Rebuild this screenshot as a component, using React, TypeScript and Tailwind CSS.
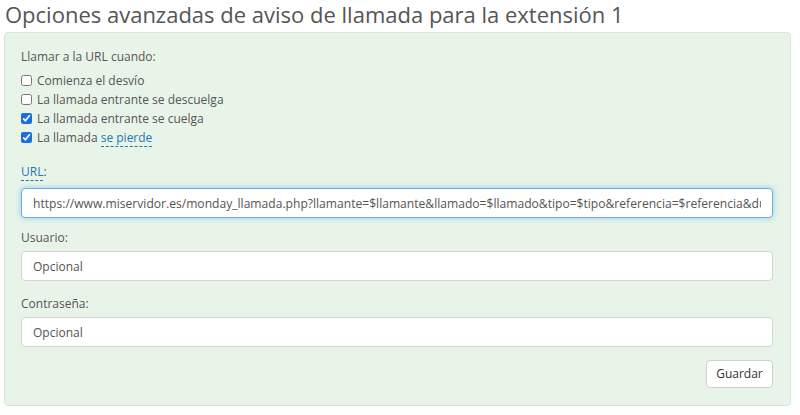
import React, { useState } from 'react';

const url =
  'https://www.miservidor.es/monday_llamada.php?llamante=$llamante&llamado=$llamado&tipo=$tipo&referencia=$referencia&duracion=$duracion';

export default function App() {
  const [checks, setChecks] = useState([false, false, true, true]);

  const toggle = (i: number) =>
    setChecks((c) => c.map((v, j) => (j === i ? !v : v)));

  const labels: React.ReactNode[] = [
    'Comienza el desvío',
    'La llamada entrante se descuelga',
    'La llamada entrante se cuelga',
    <>
      La llamada{' '}
      <span className="text-[#1f78b4] border-b border-dashed border-[#1f78b4]">se pierde</span>
    </>,
  ];

  return (
    <div
      className="w-[800px] h-[415px] bg-white text-[#555] overflow-hidden"
      style={{ fontFamily: '"Open Sans", "Liberation Sans", sans-serif' }}
    >
      <h1 className="pl-[5px] text-[22px] leading-[28px] font-normal text-[#555]">
        Opciones avanzadas de aviso de llamada para la extensión 1
      </h1>

      <div className="mt-[4px] ml-[4px] w-[787px] h-[374px] bg-[#e9f4e9] border border-[#d6e6d4] rounded-[4px] pt-[15px] pl-[16px] pr-[17px]">
        <div className="text-[12px] leading-[18px] mb-[5px]">Llamar a la URL cuando:</div>

        {labels.map((l, i) => (
          <label key={i} className="flex items-center h-[19px] text-[12px] gap-[5px] cursor-pointer">
            <input
              type="checkbox"
              checked={checks[i]}
              onChange={() => toggle(i)}
              className="w-[11px] h-[11px] m-0 accent-[#1a6fe0]"
            />
            <span>{l}</span>
          </label>
        ))}

        <div className="mt-[16px] text-[12px] leading-[18px]">
          <span className="text-[#1f78b4] border-b border-dashed border-[#1f78b4]">URL</span>:
        </div>
        <input
          type="text"
          defaultValue={url}
          className="mt-[7px] block w-full h-[30px] px-[11px] text-[12.1px] text-[#555] bg-white border border-[#66afe9] rounded-[4px] outline-none shadow-[0_0_6px_rgba(102,175,233,0.6)]"
        />

        <div className="mt-[11px] text-[12px] leading-[18px]">Usuario:</div>
        <input
          type="text"
          placeholder="Opcional"
          className="mt-[4px] block w-full h-[30px] px-[11px] text-[12px] bg-white border border-[#d4d4d4] rounded-[4px] outline-none placeholder:text-[#555]"
        />

        <div className="mt-[14px] text-[12px] leading-[18px]">Contraseña:</div>
        <input
          type="password"
          placeholder="Opcional"
          className="mt-[4px] block w-full h-[30px] px-[11px] text-[12px] bg-white border border-[#d4d4d4] rounded-[4px] outline-none placeholder:text-[#555]"
        />

        <div className="flex justify-end mt-[13px]">
          <button className="w-[67px] h-[28px] text-[12px] text-[#333] bg-white border border-[#d0d0d0] rounded-[4px]">
            Guardar
          </button>
        </div>
      </div>
    </div>
  );
}
